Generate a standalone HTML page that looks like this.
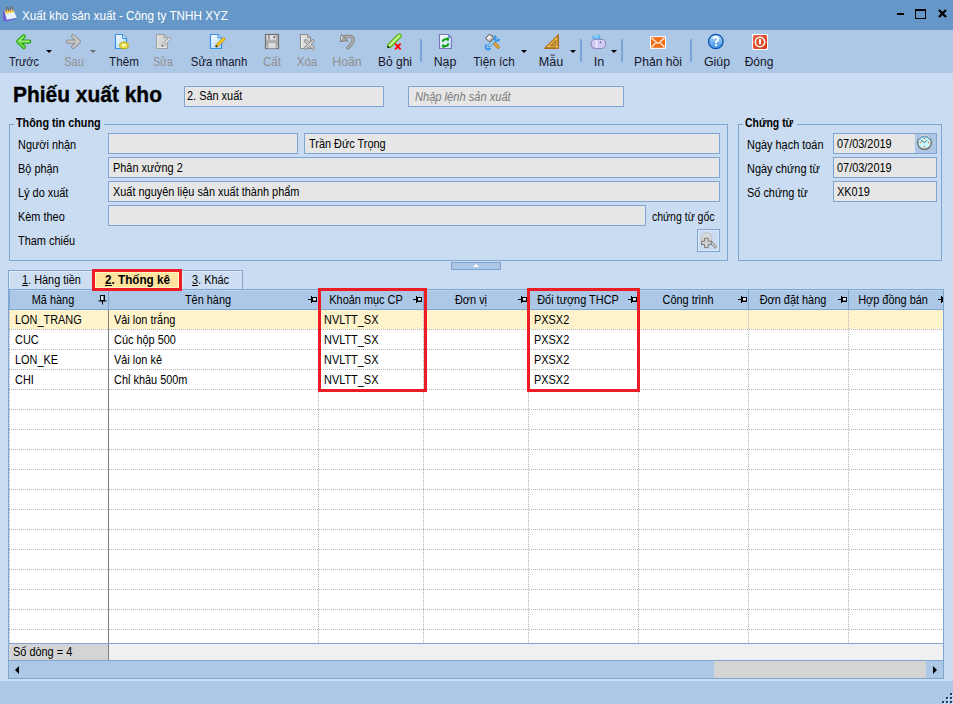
<!DOCTYPE html>
<html><head><meta charset="utf-8"><title>Xuất kho sản xuất</title>
<style>
*{margin:0;padding:0;box-sizing:border-box}
html,body{width:953px;height:704px;overflow:hidden;background:#c9dcf1;font-family:"Liberation Sans",sans-serif;font-size:12px;color:#000}
.a{position:absolute}
.t{position:absolute;white-space:nowrap;line-height:13px;font-size:12px;transform-origin:0 0}
svg.a{overflow:visible}
.dh{left:9px;width:934px;height:1px;background:repeating-linear-gradient(90deg,#b4b4b4 0 1px,transparent 1px 2px)}
.dv{top:310px;width:1px;height:333px;background:repeating-linear-gradient(180deg,#b4b4b4 0 1px,transparent 1px 2px)}
</style></head><body>
<div class="a" style="left:0px;top:0px;width:953px;height:30px;background:#6597c8;"></div>
<svg class="a" style="left:2px;top:5px" width="16" height="17" viewBox="0 0 16 17">
<path d="M1 5.6 L10.5 4.2 L14.6 13.8 L4.2 16.4 L1.2 15 Z" fill="#6a5cd4"/>
<path d="M2.4 5.6 L11 4.2 L14.8 12.8 L4.6 14.8 Z" fill="#e6f2ff"/>
<path d="M2.4 5.6 L11 4.2 L12.2 7.2 L3.4 8.8 Z" fill="#f6d04a"/>
<path d="M4.2 6.8 C3.4 0.8 6.8 0.8 6.6 6.2 M8.4 6.2 C7.8 0.4 11 0.4 10.8 5.6" stroke="#6a6a6a" stroke-width="1.1" fill="none"/>
</svg>
<div class="t" style="left:22px;top:10px;font-size:12px;font-weight:normal;font-style:normal;color:#fff;transform:scaleX(0.975);">Xuất kho sản xuất - Công ty TNHH XYZ</div>
<div class="a" style="left:897px;top:13px;width:7px;height:2px;background:#000;"></div>
<div class="a" style="left:915px;top:9px;width:11px;height:10px;border:1px solid #000;border-top-width:2px"></div>
<svg class="a" style="left:938px;top:9px" width="9" height="9" viewBox="0 0 9 9"><path d="M1 1 L8 8 M8 1 L1 8" stroke="#000" stroke-width="2.3"/></svg>
<div class="a" style="left:0px;top:30px;width:953px;height:43px;background:#adc8e6;"></div>
<svg class="a" style="left:15px;top:33px" width="18" height="18" viewBox="0 0 18 18">
<path d="M8.8 3.2 L3.2 8.6 L8.8 14 M3.6 8.6 L14.2 8.6" stroke="#22a00e" stroke-width="4.2" stroke-linecap="round" stroke-linejoin="round" fill="none"/>
<path d="M8.8 3.2 L3.2 8.6 L8.8 14 M3.6 8.6 L14.2 8.6" stroke="#6ad844" stroke-width="2.3" stroke-linecap="round" stroke-linejoin="round" fill="none"/>
<path d="M8.2 4 L4 8.2 L13.6 8.2" stroke="#c6f6a8" stroke-width="0.9" stroke-linecap="round" fill="none"/></svg>
<svg class="a" style="left:66px;top:33px" width="18" height="18" viewBox="0 0 18 18">
<path d="M7.2 3.2 L12.8 8.6 L7.2 14 M12.4 8.6 L1.8 8.6" stroke="#8e8e8e" stroke-width="4.2" stroke-linecap="round" stroke-linejoin="round" fill="none"/>
<path d="M7.2 3.2 L12.8 8.6 L7.2 14 M12.4 8.6 L1.8 8.6" stroke="#c8c8c8" stroke-width="2.3" stroke-linecap="round" stroke-linejoin="round" fill="none"/></svg>
<svg class="a" style="left:114px;top:33px" width="18" height="18" viewBox="0 0 18 18">
<defs><linearGradient id="gd" x1="0" y1="0" x2="1" y2="1"><stop offset="0" stop-color="#ffffff"/><stop offset="1" stop-color="#a8d4fb"/></linearGradient></defs>
<path d="M1.5 1.5 H8.5 L12.5 5.5 V15.5 H1.5 Z" fill="url(#gd)" stroke="#3a90e2" stroke-width="1.2"/>
<path d="M8.5 1.5 V5.5 H12.5" fill="#cfe6fc" stroke="#3a90e2" stroke-width="1"/>
<path d="M10 8 L11.2 9.3 L13.2 8.9 L13.4 10.4 L15.3 11 L14.2 12.4 L15.3 13.8 L13.4 14.4 L13.2 15.9 L11.2 15.5 L10 16.8 L8.8 15.5 L6.8 15.9 L6.6 14.4 L4.7 13.8 L5.8 12.4 L4.7 11 L6.6 10.4 L6.8 8.9 L8.8 9.3 Z" fill="#c4b000"/>
<ellipse cx="10" cy="12.4" rx="3.6" ry="2.6" fill="#eee060"/>
<ellipse cx="9.6" cy="11.9" rx="2" ry="1.2" fill="#fbf6a8"/></svg>
<svg class="a" style="left:155px;top:33px" width="18" height="18" viewBox="0 0 18 18">
<path d="M1.5 1.5 H9 L12.5 5 V15.5 H1.5 Z" fill="#d6d6d6" stroke="#a2a2a2" stroke-width="1.1"/>
<path d="M9 1.5 V5 H12.5" fill="#c4c4c4" stroke="#a2a2a2" stroke-width="0.9"/>
<path d="M2.8 3 V14.5 M2.8 14.5 H11" stroke="#ececec" stroke-width="1"/>
<path d="M7.8 12.2 L14.6 5.4" stroke="#a4a4a4" stroke-width="3" stroke-linecap="round"/>
<path d="M7.8 12.2 L14.6 5.4" stroke="#e4e4e4" stroke-width="1.4" stroke-linecap="round"/>
<circle cx="7.4" cy="12.8" r="0.8" fill="#606060"/></svg>
<svg class="a" style="left:209px;top:33px" width="18" height="18" viewBox="0 0 18 18">
<defs><linearGradient id="gq" x1="0" y1="0" x2="1" y2="1"><stop offset="0" stop-color="#ffffff"/><stop offset="1" stop-color="#a8d4fb"/></linearGradient></defs>
<path d="M1.5 1.5 H9 L12.5 5 V15.5 H1.5 Z" fill="url(#gq)" stroke="#3a90e2" stroke-width="1.2"/>
<path d="M9 1.5 V5 H12.5" fill="#cfe6fc" stroke="#3a90e2" stroke-width="1"/>
<path d="M8 12.6 L14.6 6" stroke="#c89000" stroke-width="3.4" stroke-linecap="round"/>
<path d="M8 12.6 L14.6 6" stroke="#f6ce3c" stroke-width="1.8" stroke-linecap="round"/>
<circle cx="7.4" cy="13.3" r="1" fill="#1a1a30"/></svg>
<svg class="a" style="left:264px;top:33px" width="18" height="18" viewBox="0 0 18 18">
<rect x="1.5" y="1.5" width="13" height="14" fill="#b2b2b2" stroke="#707070" stroke-width="1.2"/>
<rect x="2.5" y="2.2" width="9.5" height="4.5" fill="#e2e2e2"/>
<rect x="4.2" y="2.2" width="1.4" height="4.5" fill="#858585"/>
<rect x="9.4" y="3.2" width="1.8" height="2" fill="#6a6a6a"/>
<rect x="4" y="9.5" width="8" height="6" fill="#dcdcdc" stroke="#8a8a8a" stroke-width="0.5"/>
<circle cx="2.8" cy="14.2" r="0.7" fill="#c8e0ff"/><circle cx="13.2" cy="14.2" r="0.7" fill="#c8e0ff"/></svg>
<svg class="a" style="left:299px;top:33px" width="18" height="18" viewBox="0 0 18 18">
<path d="M1.5 1.5 H8.5 L11.5 4.5 V15.5 H1.5 Z" fill="#dedede" stroke="#8c8c8c" stroke-width="1.1"/>
<path d="M8.5 1.5 V4.5 H11.5" fill="#c8c8c8" stroke="#8c8c8c" stroke-width="0.9"/>
<path d="M2.6 3 V14.5" stroke="#f2f2f2" stroke-width="1"/>
<path d="M6.8 8 L14 15 M14 8 L6.8 15" stroke="#8a8a8a" stroke-width="3.6" stroke-linecap="round"/>
<path d="M6.8 8 L14 15 M14 8 L6.8 15" stroke="#cacaca" stroke-width="1.8" stroke-linecap="round"/></svg>
<svg class="a" style="left:339px;top:33px" width="18" height="18" viewBox="0 0 18 18">
<path d="M6 3.4 H10.5 C15.4 3.4 16 8.2 9 14.8" stroke="#868686" stroke-width="3.4" fill="none" stroke-linecap="round"/>
<path d="M6 3.4 H10.5 C15.4 3.4 16 8.2 9 14.8" stroke="#b2b2b2" stroke-width="1.5" fill="none" stroke-linecap="round"/>
<path d="M2.4 1.2 L1.2 8.6 L9.2 7.8 Z" fill="#a4a4a4" stroke="#848484" stroke-width="1" stroke-linejoin="round"/>
<path d="M2.8 3 L2.4 7" stroke="#d6d6d6" stroke-width="1.1"/></svg>
<svg class="a" style="left:386px;top:33px" width="18" height="18" viewBox="0 0 18 18">
<path d="M3.4 12.8 L13.4 2.8" stroke="#44ac00" stroke-width="4.8" stroke-linecap="round"/>
<path d="M3.4 12.8 L13.4 2.8" stroke="#b6f07e" stroke-width="2.8" stroke-linecap="round"/>
<path d="M4.2 11.2 L12.6 3" stroke="#dcfcb0" stroke-width="0.9" stroke-linecap="round"/>
<circle cx="2.4" cy="14" r="1.1" fill="#111"/>
<path d="M9.2 10.6 L14.6 16.4 M14.6 10.6 L9.2 16.4" stroke="#ff0000" stroke-width="1.9"/></svg>
<svg class="a" style="left:437px;top:33px" width="18" height="18" viewBox="0 0 18 18">
<defs><linearGradient id="gl" x1="0" y1="0" x2="1" y2="1"><stop offset="0" stop-color="#ffffff"/><stop offset="1" stop-color="#b8dcfb"/></linearGradient></defs>
<path d="M2.5 1.5 H11.5 L14.5 4.5 V15.5 H2.5 Z" fill="url(#gl)" stroke="#7a78b8" stroke-width="1.1"/>
<path d="M11.5 1.5 V4.5 H14.5" fill="#5ab0f2" stroke="#7a78b8" stroke-width="0.8"/>
<path d="M5.6 8.8 C5.8 6.6 7.6 5.8 10 6.3" stroke="#0ea00e" stroke-width="2" fill="none"/>
<path d="M9 4.2 L12.4 5.2 L11 9 Z" fill="#0ea00e"/>
<path d="M11.4 10.4 C11.2 12.6 9.4 13.4 7 12.9" stroke="#0ea00e" stroke-width="2" fill="none"/>
<path d="M8 15 L4.6 14 L6 10.2 Z" fill="#0ea00e"/></svg>
<svg class="a" style="left:484px;top:33px" width="18" height="18" viewBox="0 0 18 18">
<path d="M7 7 L14.2 14.2" stroke="#b07418" stroke-width="3.2" stroke-linecap="round"/>
<path d="M7 7 L14.2 14.2" stroke="#f0b444" stroke-width="1.5" stroke-linecap="round"/>
<path d="M1.6 5.6 L4.6 1.6 L8.4 2.6 L9.2 5.2 L5.6 8.8 Z" fill="#d4d4d4" stroke="#5e5e5e" stroke-width="1" stroke-linejoin="round"/>
<path d="M3.8 5.2 L6 3.4" stroke="#fff" stroke-width="1.4" stroke-linecap="round"/>
<path d="M5.2 12.6 L12.2 5.6" stroke="#3a92e4" stroke-width="3" stroke-linecap="round"/>
<path d="M5.2 12.6 L12.2 5.6" stroke="#d6f2ff" stroke-width="1.3" stroke-linecap="round"/>
<path d="M12 3 A2.5 2.5 0 1 0 15.4 6.2" stroke="#3a92e4" stroke-width="2" fill="none"/>
<path d="M6.4 15 A2.5 2.5 0 1 1 3 11.8" stroke="#3a92e4" stroke-width="2" fill="none"/></svg>
<svg class="a" style="left:543px;top:33px" width="18" height="18" viewBox="0 0 18 18">
<path d="M1.6 15.4 L15.4 1.6 L15.4 15.4 Z" fill="#f6c24a" stroke="#b07222" stroke-width="1.2" stroke-linejoin="round"/>
<path d="M7 12.8 L12.8 7 L12.8 12.8 Z" fill="#c08a30" stroke="#9a6a20" stroke-width="0.8"/>
<path d="M10.6 11.8 L11.9 10.4 L11.9 11.8 Z" fill="#d2e4f8"/>
<path d="M4 15.4 V14 M6 15.4 V14 M8 15.4 V14 M10 15.4 V14 M12 15.4 V14 M15.4 4 H14 M15.4 6 H14 M15.4 8 H14 M15.4 10 H14 M15.4 12 H14" stroke="#8a5a18" stroke-width="1"/></svg>
<svg class="a" style="left:590px;top:33px" width="18" height="18" viewBox="0 0 18 18">
<path d="M2.6 3.4 L8.8 1.8 L10.4 6.4 L4 8 Z" fill="#66c0f6" stroke="#3c94e0" stroke-width="0.8"/>
<path d="M3.4 3.6 L8.4 2.4" stroke="#c8f0ff" stroke-width="0.9"/>
<path d="M1.2 10 C1.2 7.2 3.4 6.4 6.5 6.4 L12 6.4 C14.4 6.4 15.7 8 15.7 10.4 C15.7 13.6 14 15.6 10.8 15.6 L4.8 15.6 C2.4 15.6 1.2 13.6 1.2 11 Z" fill="#d2ccf4" stroke="#8a82c0" stroke-width="1"/>
<path d="M5.8 7 C6.8 9.5 6.8 12.5 6.2 15" stroke="#f4f2ff" stroke-width="1.1" fill="none"/>
<path d="M2 12.5 C3 14.5 4 15 6 15" stroke="#aaa2d8" stroke-width="0.8" fill="none"/>
<circle cx="10.4" cy="9.4" r="0.8" fill="#605898"/></svg>
<svg class="a" style="left:649px;top:33px" width="18" height="18" viewBox="0 0 18 18">
<rect x="1" y="3.2" width="16" height="12.6" fill="#fff"/>
<rect x="2" y="4.2" width="14" height="10.6" fill="#f26c14"/>
<path d="M2.4 4.8 L7.6 9.6 Q9 10.9 10.4 9.6 L15.6 4.8 M2.4 14.3 L6.6 10 M15.6 14.3 L11.4 10" stroke="#ffeede" stroke-width="1.3" fill="none"/></svg>
<svg class="a" style="left:707px;top:33px" width="18" height="18" viewBox="0 0 18 18">
<defs><linearGradient id="gh" x1="0" y1="0" x2="0" y2="1"><stop offset="0" stop-color="#b4dcfc"/><stop offset="1" stop-color="#3e8ee6"/></linearGradient></defs>
<circle cx="8.8" cy="8.5" r="7.2" fill="url(#gh)" stroke="#0852ac" stroke-width="1.3"/>
<path d="M6.6 6 C6.6 3.4 11.2 3.4 11.2 6 C11.2 7.8 9 7.8 9 10" stroke="#fff" stroke-width="2" fill="none"/>
<rect x="8" y="11.2" width="2" height="2" fill="#fff"/></svg>
<svg class="a" style="left:751px;top:33px" width="18" height="18" viewBox="0 0 18 18">
<defs><linearGradient id="gc" x1="0" y1="0" x2="1" y2="1"><stop offset="0" stop-color="#e8664a"/><stop offset="1" stop-color="#d83a10"/></linearGradient></defs>
<rect x="1" y="1" width="16" height="16" fill="#fff" rx="1"/>
<rect x="2" y="2" width="14" height="14" fill="url(#gc)" rx="1.5"/>
<circle cx="9" cy="9" r="4.7" fill="none" stroke="#fff" stroke-width="1.5"/>
<rect x="8" y="6.2" width="2" height="5" fill="#fff"/></svg>
<div class="a" style="left:46px;top:50px;width:0;height:0;border-left:3px solid transparent;border-right:3px solid transparent;border-top:3px solid #000"></div>
<div class="a" style="left:90px;top:50px;width:0;height:0;border-left:3px solid transparent;border-right:3px solid transparent;border-top:3px solid #6a6a6a"></div>
<div class="a" style="left:521px;top:50px;width:0;height:0;border-left:3px solid transparent;border-right:3px solid transparent;border-top:3px solid #000"></div>
<div class="a" style="left:570px;top:50px;width:0;height:0;border-left:3px solid transparent;border-right:3px solid transparent;border-top:3px solid #000"></div>
<div class="a" style="left:611px;top:50px;width:0;height:0;border-left:3px solid transparent;border-right:3px solid transparent;border-top:3px solid #000"></div>
<div class="a" style="left:420px;top:39px;width:2px;height:23px;background:#7aa5d9;border-radius:1px"></div>
<div class="a" style="left:580px;top:39px;width:2px;height:23px;background:#7aa5d9;border-radius:1px"></div>
<div class="a" style="left:621px;top:39px;width:2px;height:23px;background:#7aa5d9;border-radius:1px"></div>
<div class="a" style="left:690px;top:39px;width:2px;height:23px;background:#7aa5d9;border-radius:1px"></div>
<div class="t" style="left:23.5px;top:56px;font-size:12px;font-weight:normal;color:#15152a;transform-origin:0 0;transform:scaleX(0.91) translateX(-50%);">Trước</div>
<div class="t" style="left:74px;top:56px;font-size:12px;font-weight:normal;color:#8f8f8f;transform-origin:0 0;transform:scaleX(0.92) translateX(-50%);">Sau</div>
<div class="t" style="left:123.5px;top:56px;font-size:12px;font-weight:normal;color:#15152a;transform-origin:0 0;transform:scaleX(0.97) translateX(-50%);">Thêm</div>
<div class="t" style="left:163px;top:56px;font-size:12px;font-weight:normal;color:#8f8f8f;transform-origin:0 0;transform:scaleX(0.86) translateX(-50%);">Sửa</div>
<div class="t" style="left:218.5px;top:56px;font-size:12px;font-weight:normal;color:#15152a;transform-origin:0 0;transform:scaleX(0.95) translateX(-50%);">Sửa nhanh</div>
<div class="t" style="left:271.5px;top:56px;font-size:12px;font-weight:normal;color:#8f8f8f;transform-origin:0 0;transform:scaleX(0.95) translateX(-50%);">Cất</div>
<div class="t" style="left:307px;top:56px;font-size:12px;font-weight:normal;color:#8f8f8f;transform-origin:0 0;transform:scaleX(0.96) translateX(-50%);">Xóa</div>
<div class="t" style="left:347px;top:56px;font-size:12px;font-weight:normal;color:#8f8f8f;transform-origin:0 0;transform:scaleX(1.02) translateX(-50%);">Hoãn</div>
<div class="t" style="left:395px;top:56px;font-size:12px;font-weight:normal;color:#15152a;transform-origin:0 0;transform:scaleX(1.0) translateX(-50%);">Bỏ ghi</div>
<div class="t" style="left:445px;top:56px;font-size:12px;font-weight:normal;color:#15152a;transform-origin:0 0;transform:scaleX(1.03) translateX(-50%);">Nạp</div>
<div class="t" style="left:493.5px;top:56px;font-size:12px;font-weight:normal;color:#15152a;transform-origin:0 0;transform:scaleX(0.98) translateX(-50%);">Tiện ích</div>
<div class="t" style="left:551px;top:56px;font-size:12px;font-weight:normal;color:#15152a;transform-origin:0 0;transform:scaleX(1.05) translateX(-50%);">Mẫu</div>
<div class="t" style="left:598.5px;top:56px;font-size:12px;font-weight:normal;color:#15152a;transform-origin:0 0;transform:scaleX(1.05) translateX(-50%);">In</div>
<div class="t" style="left:658px;top:56px;font-size:12px;font-weight:normal;color:#15152a;transform-origin:0 0;transform:scaleX(1.01) translateX(-50%);">Phản hồi</div>
<div class="t" style="left:716.5px;top:56px;font-size:12px;font-weight:normal;color:#15152a;transform-origin:0 0;transform:scaleX(1.03) translateX(-50%);">Giúp</div>
<div class="t" style="left:759px;top:56px;font-size:12px;font-weight:normal;color:#15152a;transform-origin:0 0;transform:scaleX(1.0) translateX(-50%);">Đóng</div>
<div class="t" style="left:13px;top:82px;font-size:22px;line-height:25px;font-weight:bold;color:#000;transform:scaleX(0.952);-webkit-text-stroke:0.35px #000">Phiếu xuất kho</div>
<div class="a" style="left:184px;top:86px;width:200px;height:21px;background:#e6e6e6;border:1px solid #7fa5d3;"></div>
<div class="t" style="left:187px;top:90px;font-size:12px;font-weight:normal;font-style:normal;color:#000;transform:scaleX(0.91);">2. Sản xuất</div>
<div class="a" style="left:408px;top:86px;width:216px;height:21px;background:#e6e6e6;border:1px solid #7fa5d3;"></div>
<div class="t" style="left:415px;top:91px;font-size:12px;font-weight:normal;font-style:italic;color:#7a7a7a;transform:scaleX(0.925);">Nhập lệnh sản xuất</div>
<div class="a" style="left:9px;top:124px;width:719px;height:137px;border:1px solid #7fa5d3"></div>
<div class="a" style="left:14px;top:120px;width:90px;height:8px;background:#c9dcf1;"></div>
<div class="t" style="left:16px;top:117px;font-size:12px;font-weight:bold;font-style:normal;color:#000;transform:scaleX(0.9);">Thông tin chung</div>
<div class="t" style="left:18px;top:139px;font-size:12px;font-weight:normal;font-style:normal;color:#000;transform:scaleX(0.91);">Người nhận</div>
<div class="t" style="left:18px;top:163px;font-size:12px;font-weight:normal;font-style:normal;color:#000;transform:scaleX(0.91);">Bộ phận</div>
<div class="t" style="left:18px;top:187px;font-size:12px;font-weight:normal;font-style:normal;color:#000;transform:scaleX(0.91);">Lý do xuất</div>
<div class="t" style="left:18px;top:211px;font-size:12px;font-weight:normal;font-style:normal;color:#000;transform:scaleX(0.91);">Kèm theo</div>
<div class="t" style="left:18px;top:235px;font-size:12px;font-weight:normal;font-style:normal;color:#000;transform:scaleX(0.91);">Tham chiếu</div>
<div class="a" style="left:108px;top:133px;width:190px;height:21px;background:#e6e6e6;border:1px solid #7fa5d3;"></div>
<div class="a" style="left:304px;top:133px;width:416px;height:21px;background:#e6e6e6;border:1px solid #7fa5d3;"></div>
<div class="t" style="left:309px;top:138px;font-size:12px;font-weight:normal;font-style:normal;color:#000;transform:scaleX(0.91);">Trần Đức Trọng</div>
<div class="a" style="left:108px;top:157px;width:612px;height:21px;background:#e6e6e6;border:1px solid #7fa5d3;"></div>
<div class="t" style="left:113px;top:162px;font-size:12px;font-weight:normal;font-style:normal;color:#000;transform:scaleX(0.91);">Phân xưởng 2</div>
<div class="a" style="left:108px;top:181px;width:612px;height:21px;background:#e6e6e6;border:1px solid #7fa5d3;"></div>
<div class="t" style="left:113px;top:186px;font-size:12px;font-weight:normal;font-style:normal;color:#000;transform:scaleX(0.91);">Xuất nguyên liệu sản xuất thành phẩm</div>
<div class="a" style="left:108px;top:205px;width:538px;height:21px;background:#e6e6e6;border:1px solid #7fa5d3;"></div>
<div class="t" style="left:652px;top:211px;font-size:12px;font-weight:normal;font-style:normal;color:#000;transform:scaleX(0.875);">chứng từ gốc</div>
<div class="a" style="left:697px;top:229px;width:23px;height:23px;border:1px solid #7fa5d3;background:#c9dcf1;box-shadow:inset 1px 1px 0 #dde9f7, inset -1px -1px 0 #dde9f7"></div>
<svg class="a" style="left:700px;top:232px" width="18" height="18" viewBox="0 0 18 18">
<path d="M10.5 9.5 L15.2 14.8" stroke="#8c8c8c" stroke-width="3.2" stroke-linecap="round"/>
<path d="M10.5 9.5 L15.2 14.8" stroke="#d2d2d2" stroke-width="1.4" stroke-linecap="round"/>
<circle cx="6.8" cy="5.8" r="5.2" fill="#d8d8d8" stroke="#bcbcbc" stroke-width="0.9"/>
<path d="M1.5 9.2 H4.6 V6.2 H8.2 V9.2 H11.3 V12.6 H8.2 V15.6 H4.6 V12.6 H1.5 Z" fill="#d0d0d0" stroke="#7a7a7a" stroke-width="1"/></svg>
<div class="a" style="left:738px;top:124px;width:204px;height:137px;border:1px solid #7fa5d3"></div>
<div class="a" style="left:743px;top:120px;width:54px;height:8px;background:#c9dcf1;"></div>
<div class="t" style="left:745px;top:117px;font-size:12px;font-weight:bold;font-style:normal;color:#000;transform:scaleX(0.87);">Chứng từ</div>
<div class="t" style="left:747px;top:139px;font-size:12px;font-weight:normal;font-style:normal;color:#000;transform:scaleX(0.91);">Ngày hạch toán</div>
<div class="t" style="left:747px;top:163px;font-size:12px;font-weight:normal;font-style:normal;color:#000;transform:scaleX(0.91);">Ngày chứng từ</div>
<div class="t" style="left:747px;top:187px;font-size:12px;font-weight:normal;font-style:normal;color:#000;transform:scaleX(0.91);">Số chứng từ</div>
<div class="a" style="left:833px;top:133px;width:104px;height:21px;background:#e6e6e6;border:1px solid #7fa5d3;"></div>
<div class="a" style="left:915px;top:134px;width:21px;height:19px;background:#adc8e6;"></div>
<svg class="a" style="left:915px;top:134px" width="20" height="18" viewBox="0 0 20 18">
<circle cx="9.5" cy="8.5" r="6.9" fill="#c6f8fc" stroke="#7a7a7a" stroke-width="1.6"/>
<path d="M4.2 5.6 A6 5 0 0 1 14.8 5.6" stroke="#6ab4ec" stroke-width="1.2" fill="none"/>
<path d="M3.6 4.4 A6.6 6 0 0 1 15.4 4.4" stroke="#ffffff" stroke-width="0.8" fill="none"/>
<path d="M6 6.2 L9.5 8.6 L12.2 6.2" stroke="#555" stroke-width="0.9" fill="none"/>
<circle cx="9.5" cy="4.4" r="0.75" fill="#f0602a"/><circle cx="9.5" cy="12.5" r="0.75" fill="#f0602a"/>
<circle cx="5.4" cy="8.5" r="0.75" fill="#f0602a"/><circle cx="13.6" cy="8.5" r="0.75" fill="#f0602a"/></svg>
<div class="t" style="left:837px;top:138px;font-size:12px;font-weight:normal;font-style:normal;color:#000;transform:scaleX(0.91);">07/03/2019</div>
<div class="a" style="left:833px;top:157px;width:104px;height:21px;background:#e6e6e6;border:1px solid #7fa5d3;"></div>
<div class="t" style="left:837px;top:162px;font-size:12px;font-weight:normal;font-style:normal;color:#000;transform:scaleX(0.91);">07/03/2019</div>
<div class="a" style="left:833px;top:181px;width:104px;height:21px;background:#e6e6e6;border:1px solid #7fa5d3;"></div>
<div class="t" style="left:837px;top:186px;font-size:12px;font-weight:normal;font-style:normal;color:#000;transform:scaleX(0.91);">XK019</div>
<div class="a" style="left:451px;top:262px;width:50px;height:8px;background:#adc8e6;border:1px solid #7fa5d3;"></div>
<svg class="a" style="left:472px;top:263px" width="8" height="5" viewBox="0 0 8 5"><path d="M1 4 L4 0.8 L7 4 Z" fill="#fff"/></svg>
<div class="a" style="left:8px;top:270px;width:85px;height:20px;background:#cddef2;border:1px solid #7fa5d3;border-bottom:none;box-shadow:inset 1px 1px 0 #e2edf9"></div>
<div class="a" style="left:181px;top:270px;width:62px;height:20px;background:#cddef2;border:1px solid #7fa5d3;border-bottom:none;box-shadow:inset 1px 1px 0 #e2edf9"></div>
<div class="t" style="left:22px;top:274px;font-size:12px;font-weight:normal;font-style:normal;color:#000;transform:scaleX(0.91);">1. Hàng tiền</div>
<div class="a" style="left:22px;top:285px;width:6px;height:1px;background:#000;"></div>
<div class="t" style="left:192px;top:274px;font-size:12px;font-weight:normal;font-style:normal;color:#000;transform:scaleX(0.91);">3. Khác</div>
<div class="a" style="left:192px;top:285px;width:6px;height:1px;background:#000;"></div>
<div class="a" style="left:8px;top:289px;width:936px;height:390px;background:#fff;border:1px solid #7fa5d3"></div>
<div class="a" style="left:9px;top:290px;width:934px;height:19px;background:#adc8e6;"></div>
<div class="a" style="left:10px;top:290px;width:933px;height:1px;background:#b8d6f4;"></div>
<div class="a" style="left:9px;top:309px;width:934px;height:1px;background:#7fa5d3;"></div>
<div class="a" style="left:9px;top:290px;width:1px;height:19px;background:#7fa5d3;"></div>
<div class="a" style="left:9px;top:310px;width:934px;height:19px;background:#fff3cc;"></div>
<div class="a" style="left:108px;top:290px;width:1px;height:19px;background:#7fa5d3;"></div>
<div class="a" style="left:318px;top:290px;width:1px;height:19px;background:#7fa5d3;"></div>
<div class="a" style="left:423px;top:290px;width:1px;height:19px;background:#7fa5d3;"></div>
<div class="a" style="left:528px;top:290px;width:1px;height:19px;background:#7fa5d3;"></div>
<div class="a" style="left:638px;top:290px;width:1px;height:19px;background:#7fa5d3;"></div>
<div class="a" style="left:748px;top:290px;width:1px;height:19px;background:#7fa5d3;"></div>
<div class="a" style="left:848px;top:290px;width:1px;height:19px;background:#7fa5d3;"></div>
<div class="a dh" style="top:329px"></div>
<div class="a dh" style="top:349px"></div>
<div class="a dh" style="top:369px"></div>
<div class="a dh" style="top:389px"></div>
<div class="a dh" style="top:409px"></div>
<div class="a dh" style="top:429px"></div>
<div class="a dh" style="top:449px"></div>
<div class="a dh" style="top:469px"></div>
<div class="a dh" style="top:489px"></div>
<div class="a dh" style="top:509px"></div>
<div class="a dh" style="top:529px"></div>
<div class="a dh" style="top:549px"></div>
<div class="a dh" style="top:569px"></div>
<div class="a dh" style="top:589px"></div>
<div class="a dh" style="top:609px"></div>
<div class="a dh" style="top:629px"></div>
<div class="a dv" style="left:9px"></div>
<div class="a dv" style="left:318px"></div>
<div class="a dv" style="left:423px"></div>
<div class="a dv" style="left:528px"></div>
<div class="a dv" style="left:638px"></div>
<div class="a dv" style="left:748px"></div>
<div class="a dv" style="left:848px"></div>
<div class="a" style="left:108px;top:310px;width:1px;height:350px;background:#808080;"></div>
<div class="a" style="left:9px;top:643px;width:934px;height:1px;background:#7fa5d3;"></div>
<div class="a" style="left:9px;top:644px;width:99px;height:16px;background:#d4d4d4;"></div>
<div class="a" style="left:109px;top:644px;width:834px;height:16px;background:#f0f0f0;"></div>
<div class="t" style="left:13px;top:646px;font-size:12px;font-weight:normal;font-style:normal;color:#000;transform:scaleX(0.91);">Số dòng = 4</div>
<div class="a" style="left:9px;top:660px;width:934px;height:1px;background:#7fa5d3;"></div>
<div class="a" style="left:9px;top:661px;width:934px;height:17px;background:#adc8e6;"></div>
<div class="a" style="left:714px;top:661px;width:212px;height:17px;background:#d4d4d4;"></div>
<div class="a" style="left:15px;top:666px;width:0;height:0;border-top:4px solid transparent;border-bottom:4px solid transparent;border-right:4px solid #000"></div>
<div class="a" style="left:933px;top:666px;width:0;height:0;border-top:4px solid transparent;border-bottom:4px solid transparent;border-left:4px solid #000"></div>
<div class="a" style="left:9px;top:290px;width:934px;height:19px;overflow:hidden">
<div class="t" style="left:44.0px;top:4px;font-size:12px;font-weight:normal;color:#000;transform-origin:0 0;transform:scaleX(0.91) translateX(-50%);">Mã hàng</div>
<div class="t" style="left:199.0px;top:4px;font-size:12px;font-weight:normal;color:#000;transform-origin:0 0;transform:scaleX(0.91) translateX(-50%);">Tên hàng</div>
<div class="t" style="left:356.5px;top:4px;font-size:12px;font-weight:normal;color:#000;transform-origin:0 0;transform:scaleX(0.91) translateX(-50%);">Khoản mục CP</div>
<div class="t" style="left:461.5px;top:4px;font-size:12px;font-weight:normal;color:#000;transform-origin:0 0;transform:scaleX(0.91) translateX(-50%);">Đơn vị</div>
<div class="t" style="left:569.0px;top:4px;font-size:12px;font-weight:normal;color:#000;transform-origin:0 0;transform:scaleX(0.91) translateX(-50%);">Đối tượng THCP</div>
<div class="t" style="left:679.0px;top:4px;font-size:12px;font-weight:normal;color:#000;transform-origin:0 0;transform:scaleX(0.91) translateX(-50%);">Công trình</div>
<div class="t" style="left:784.0px;top:4px;font-size:12px;font-weight:normal;color:#000;transform-origin:0 0;transform:scaleX(0.91) translateX(-50%);">Đơn đặt hàng</div>
<div class="t" style="left:884.0px;top:4px;font-size:12px;font-weight:normal;color:#000;transform-origin:0 0;transform:scaleX(0.91) translateX(-50%);">Hợp đồng bán</div>
</div>
<div class="a" style="left:9px;top:290px;width:934px;height:19px;overflow:hidden">
<svg class="a" style="left:89px;top:4px" width="9" height="11" viewBox="0 0 9 11"><rect x="2.5" y="1.5" width="4" height="5" fill="#dbe8f5" stroke="#000" stroke-width="1"/><path d="M6 1 V7" stroke="#000"/><path d="M0.5 7 H8.5" stroke="#000"/><path d="M4.5 7 V10.5" stroke="#000"/></svg>
<svg class="a" style="left:299px;top:5px" width="9" height="9" viewBox="0 0 9 9"><path d="M0 4.5 H3" stroke="#000"/><path d="M3.5 1 V8" stroke="#000"/><rect x="4.5" y="2.5" width="4" height="4" fill="#dbe8f5" stroke="#000" stroke-width="1"/><path d="M4 6 H9" stroke="#000"/></svg>
<svg class="a" style="left:404px;top:5px" width="9" height="9" viewBox="0 0 9 9"><path d="M0 4.5 H3" stroke="#000"/><path d="M3.5 1 V8" stroke="#000"/><rect x="4.5" y="2.5" width="4" height="4" fill="#dbe8f5" stroke="#000" stroke-width="1"/><path d="M4 6 H9" stroke="#000"/></svg>
<svg class="a" style="left:509px;top:5px" width="9" height="9" viewBox="0 0 9 9"><path d="M0 4.5 H3" stroke="#000"/><path d="M3.5 1 V8" stroke="#000"/><rect x="4.5" y="2.5" width="4" height="4" fill="#dbe8f5" stroke="#000" stroke-width="1"/><path d="M4 6 H9" stroke="#000"/></svg>
<svg class="a" style="left:619px;top:5px" width="9" height="9" viewBox="0 0 9 9"><path d="M0 4.5 H3" stroke="#000"/><path d="M3.5 1 V8" stroke="#000"/><rect x="4.5" y="2.5" width="4" height="4" fill="#dbe8f5" stroke="#000" stroke-width="1"/><path d="M4 6 H9" stroke="#000"/></svg>
<svg class="a" style="left:729px;top:5px" width="9" height="9" viewBox="0 0 9 9"><path d="M0 4.5 H3" stroke="#000"/><path d="M3.5 1 V8" stroke="#000"/><rect x="4.5" y="2.5" width="4" height="4" fill="#dbe8f5" stroke="#000" stroke-width="1"/><path d="M4 6 H9" stroke="#000"/></svg>
<svg class="a" style="left:829px;top:5px" width="9" height="9" viewBox="0 0 9 9"><path d="M0 4.5 H3" stroke="#000"/><path d="M3.5 1 V8" stroke="#000"/><rect x="4.5" y="2.5" width="4" height="4" fill="#dbe8f5" stroke="#000" stroke-width="1"/><path d="M4 6 H9" stroke="#000"/></svg>
<svg class="a" style="left:929px;top:5px" width="9" height="9" viewBox="0 0 9 9"><path d="M0 4.5 H3" stroke="#000"/><path d="M3.5 1 V8" stroke="#000"/><rect x="4.5" y="2.5" width="4" height="4" fill="#dbe8f5" stroke="#000" stroke-width="1"/><path d="M4 6 H9" stroke="#000"/></svg>
</div>
<div class="t" style="left:15px;top:314px;font-size:12px;font-weight:normal;font-style:normal;color:#000;transform:scaleX(0.91);">LON_TRANG</div>
<div class="t" style="left:114px;top:314px;font-size:12px;font-weight:normal;font-style:normal;color:#000;transform:scaleX(0.91);">Vải lon trắng</div>
<div class="t" style="left:324px;top:314px;font-size:12px;font-weight:normal;font-style:normal;color:#000;transform:scaleX(0.91);">NVLTT_SX</div>
<div class="t" style="left:534px;top:314px;font-size:12px;font-weight:normal;font-style:normal;color:#000;transform:scaleX(0.91);">PXSX2</div>
<div class="t" style="left:15px;top:334px;font-size:12px;font-weight:normal;font-style:normal;color:#000;transform:scaleX(0.91);">CUC</div>
<div class="t" style="left:114px;top:334px;font-size:12px;font-weight:normal;font-style:normal;color:#000;transform:scaleX(0.91);">Cúc hộp 500</div>
<div class="t" style="left:324px;top:334px;font-size:12px;font-weight:normal;font-style:normal;color:#000;transform:scaleX(0.91);">NVLTT_SX</div>
<div class="t" style="left:534px;top:334px;font-size:12px;font-weight:normal;font-style:normal;color:#000;transform:scaleX(0.91);">PXSX2</div>
<div class="t" style="left:15px;top:354px;font-size:12px;font-weight:normal;font-style:normal;color:#000;transform:scaleX(0.91);">LON_KE</div>
<div class="t" style="left:114px;top:354px;font-size:12px;font-weight:normal;font-style:normal;color:#000;transform:scaleX(0.91);">Vải lon kẻ</div>
<div class="t" style="left:324px;top:354px;font-size:12px;font-weight:normal;font-style:normal;color:#000;transform:scaleX(0.91);">NVLTT_SX</div>
<div class="t" style="left:534px;top:354px;font-size:12px;font-weight:normal;font-style:normal;color:#000;transform:scaleX(0.91);">PXSX2</div>
<div class="t" style="left:15px;top:374px;font-size:12px;font-weight:normal;font-style:normal;color:#000;transform:scaleX(0.91);">CHI</div>
<div class="t" style="left:114px;top:374px;font-size:12px;font-weight:normal;font-style:normal;color:#000;transform:scaleX(0.91);">Chỉ khâu 500m</div>
<div class="t" style="left:324px;top:374px;font-size:12px;font-weight:normal;font-style:normal;color:#000;transform:scaleX(0.91);">NVLTT_SX</div>
<div class="t" style="left:534px;top:374px;font-size:12px;font-weight:normal;font-style:normal;color:#000;transform:scaleX(0.91);">PXSX2</div>
<div class="a" style="z-index:5;left:318px;top:288px;width:109px;height:104px;border:3px solid #ee1c25"></div>
<div class="a" style="z-index:5;left:527px;top:288px;width:113px;height:104px;border:3px solid #ee1c25"></div>
<div class="a" style="z-index:5;left:92px;top:269px;width:90px;height:22px;background:#fde39e;border:3px solid #ee1c25;box-shadow:inset 1px 1px 0 #fff6c0,inset -1px -1px 0 #fff6c0"></div>
<div class="t" style="left:105px;top:274px;font-size:12px;font-weight:bold;font-style:normal;color:#000;transform:scaleX(0.975);z-index:6">2. Thống kê</div>
<div class="a" style="left:105px;top:285px;width:7px;height:1px;background:#000;z-index:6"></div>
<div class="a" style="left:0px;top:681px;width:953px;height:23px;background:#adc8e6;"></div>
<div class="a" style="left:950px;top:693px;width:2px;height:2px;background:#1f3c6a;box-shadow:1px 1px 0 #d4e4f6"></div>
<div class="a" style="left:946px;top:697px;width:2px;height:2px;background:#1f3c6a;box-shadow:1px 1px 0 #d4e4f6"></div>
<div class="a" style="left:950px;top:697px;width:2px;height:2px;background:#1f3c6a;box-shadow:1px 1px 0 #d4e4f6"></div>
<div class="a" style="left:942px;top:701px;width:2px;height:2px;background:#1f3c6a;box-shadow:1px 1px 0 #d4e4f6"></div>
<div class="a" style="left:946px;top:701px;width:2px;height:2px;background:#1f3c6a;box-shadow:1px 1px 0 #d4e4f6"></div>
<div class="a" style="left:950px;top:701px;width:2px;height:2px;background:#1f3c6a;box-shadow:1px 1px 0 #d4e4f6"></div>
</body></html>
